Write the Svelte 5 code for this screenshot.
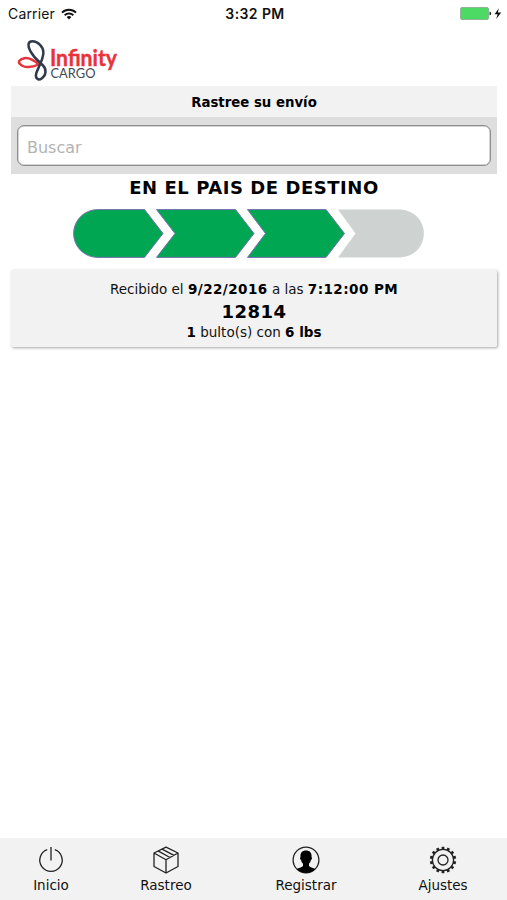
<script lang="ts">
  let query = $state('');

  const shipment = {
    status: 'EN EL PAIS DE DESTINO',
    date: '9/22/2016',
    time: '7:12:00 PM',
    code: '12814',
    packages: 1,
    weight: '6 lbs',
  };

  // How many of the four delivery stages have been reached
  const reached = 3;

  const stages = [
    'M24.5 .6H71.5L90 24.5L71.5 48.4H24.5A23.9 23.9 0 0 1 24.5 .6Z',
    'M83.5 .6H162.5L181 24.5L162.5 48.4H83.5L102 24.5Z',
    'M174.5 .6H253L271.5 24.5L253 48.4H174.5L192.5 24.5Z',
    'M265 .6H327A23.9 23.9 0 0 1 327 48.4H265L282.5 24.5Z',
  ];

  const tabs = ['Inicio', 'Rastreo', 'Registrar', 'Ajustes'];

  const teeth = Array.from({ length: 14 }, (_, i) => (i * 360) / 14);
</script>

<div class="screen">
  <div class="status-bar">
    <div class="carrier">
      <span>Carrier</span>
      <svg width="16" height="12" viewBox="0 0 16 12" fill="none" stroke="#111" stroke-width="2">
        <path d="M1 4.6a10 10 0 0 1 14 0" />
        <path d="M3.7 7.3a6.1 6.1 0 0 1 8.6 0" />
        <path d="M8 11.6 5.6 9.1a3.5 3.5 0 0 1 4.8 0Z" fill="#111" stroke="none" />
      </svg>
    </div>
    <span class="clock">3:32 PM</span>
    <svg class="battery" width="42" height="14" viewBox="0 0 42 14">
      <rect x=".5" y=".5" width="28" height="12" rx="1.5" fill="#4cd964" stroke="#8fb396" />
      <path d="M29.5 4.8h.7q.9 0 .9 1.7t-.9 1.7h-.7Z" fill="#222" />
      <path d="M38.8 1.2 34.6 7.2h3L36.2 12l5-6.5h-3.3Z" fill="#111" />
    </svg>
  </div>

  <header class="brand">
    <svg width="104" height="44" viewBox="0 0 104 44" role="img" aria-label="Infinity Cargo">
      <g fill="none" stroke-width="2.5" stroke-linejoin="round">
        <path stroke="#e5343b" d="M21.500 25.500C18 21.500 12 18.500 7.500 19.200C3 20 .5 22.500 3 25C6.500 29 15 28.800 21.500 25.500Z" />
        <path stroke="#2f3b4b" d="M15.500 2.300C10.500 2.300 10.500 7.300 13.500 12.300C17.500 19.500 22 22.500 26 26.500C30 30.500 29 36.500 24.700 39.500C21 42 18 39 19.200 34.500C20.500 29.500 26.400 21 26.400 13.500C26.400 7.500 20.500 2.300 15.500 2.300Z" />
      </g>
      <text class="brand-name" x="33" y="27" textLength="67" lengthAdjust="spacingAndGlyphs">Infinity</text>
      <text class="brand-sub" x="33.500" y="39.300" textLength="45" lengthAdjust="spacingAndGlyphs">CARGO</text>
    </svg>
  </header>

  <main>
    <h1>Rastree su envío</h1>
    <div class="search">
      <input type="text" placeholder="Buscar" bind:value={query} />
    </div>

    <h2>{shipment.status}</h2>
    <svg class="progress" width="351" height="49" viewBox="0 0 351 49">
      {#each stages as d, i}
        <path {d} class:done={i < reached} />
      {/each}
    </svg>

    <section class="card">
      <p class="received">Recibido el <b>{shipment.date}</b> a las <b>{shipment.time}</b></p>
      <p class="code">{shipment.code}</p>
      <p><b>{shipment.packages}</b> bulto(s) con <b>{shipment.weight}</b></p>
    </section>
  </main>

  <nav>
    {#each tabs as tab, i}
      <div class="tab">
        <svg width="28" height="28" viewBox="0 0 28 28" fill="none" stroke="#222" stroke-width="1.3">
          {#if i === 0}
            <path d="M10.200 3.700A11.200 11.200 0 1 0 17.800 3.700M14 1v13.500" />
          {:else if i === 1}
            <path stroke-linejoin="round" d="M14 1.200 26 7v13.500L14 27 2 20.500V7ZM2 7l12 6.800L26 7M14 13.800V27M6 4.900 18 11.500M10 3.100 22 9.300" />
          {:else if i === 2}
            <circle cx="14" cy="14" r="12.900" />
            <path fill="#000" stroke="none" d="M14 4.600c4 0 6 2.700 5.500 6.300.8.600.5 2.800-.6 3.200-.3 1.700-1 2.900-1.900 3.600v2.200c1.500 1.400 4.500 1.900 6.200 3.200a12.900 12.900 0 0 1-18.400 0c1.700-1.300 4.700-1.800 6.200-3.200v-2.200c-.9-.7-1.600-1.900-1.900-3.600-1.100-.4-1.400-2.600-.6-3.200-.5-3.600 1.500-6.300 5.500-6.300Z" />
          {:else}
            <circle cx="14" cy="14" r="10.600" />
            <circle cx="14" cy="14" r="5" />
            {#each teeth as angle}
              <path d="M12.600 2.200h2.800" stroke-width="2.800" transform="rotate({angle} 14 14)" />
            {/each}
          {/if}
        </svg>
        <span>{tab}</span>
      </div>
    {/each}
  </nav>
</div>

<style>
  :global(body) {
    margin: 0;
    background: #fff;
  }

  .screen {
    display: flex;
    flex-direction: column;
    width: 507px;
    height: 900px;
    overflow: hidden;
    font-family: Verdana, 'DejaVu Sans', sans-serif;
    font-size: 13.5px;
    color: #111;
  }

  .status-bar {
    display: grid;
    grid-template-columns: 1fr auto 1fr;
    align-items: center;
    height: 28px;
    padding: 0 5px 1px 8px;
    box-sizing: border-box;
    font-family: Inter, Roboto, sans-serif;
    font-size: 14px;
    line-height: 17px;
  }
  .carrier {
    display: flex;
    align-items: center;
    gap: 6px;
    letter-spacing: 0.15px;
  }
  .clock {
    font-weight: 600;
    letter-spacing: 0.4px;
  }
  .battery {
    justify-self: end;
  }

  .brand {
    height: 47px;
    padding: 11px 0 0 17px;
  }
  .brand svg {
    display: block;
    overflow: visible;
  }
  .brand-name {
    font: 700 23.5px Lato, sans-serif;
    fill: #e9323a;
    stroke: #e9323a;
    stroke-width: 0.4px;
  }
  .brand-sub {
    font: 400 14px Lato, sans-serif;
    fill: #46484f;
  }

  main {
    flex: 1;
    padding: 0 10px 0 11px;
  }
  h1 {
    margin: 0;
    height: 31px;
    line-height: 33px;
    background: #f2f2f2;
    text-align: center;
    font-size: 13.3px;
    color: #000;
  }
  .search {
    height: 57px;
    padding: 8px 6px;
    box-sizing: border-box;
    background: #dedede;
  }
  .search input {
    display: block;
    width: 100%;
    height: 41px;
    padding: 3px 8px 0 9px;
    box-sizing: border-box;
    border: 1px solid #8e8e8e;
    border-radius: 7px;
    background: #fff;
    box-shadow: inset 0 0 0 0.5px #aaa;
    font: 16px Verdana, 'DejaVu Sans', sans-serif;
    outline: none;
  }
  .search input::placeholder {
    color: #b3b3b3;
    opacity: 1;
  }

  h2 {
    margin: 0;
    height: 35px;
    line-height: 28px;
    text-align: center;
    font-size: 18px;
    letter-spacing: 0.55px;
    color: #000;
  }
  .progress {
    display: block;
    margin-left: 62px;
  }
  .progress path {
    fill: #ced3d1;
  }
  .progress path.done {
    fill: #00a651;
    stroke: #7770b0;
    stroke-width: 1;
  }

  .card {
    height: 77px;
    margin: 12px 0 0;
    padding-top: 9px;
    box-sizing: border-box;
    border-radius: 2px;
    background: #f2f2f2;
    box-shadow: 1px 1px 3px rgba(0, 0, 0, 0.35);
    text-align: center;
  }
  .card p {
    margin: 0;
    line-height: 21.5px;
  }
  .card b,
  .card .code {
    color: #000;
  }
  .received b {
    letter-spacing: 0.45px;
  }
  .card .code {
    font-size: 18px;
    font-weight: 700;
    letter-spacing: 0.5px;
  }

  nav {
    display: grid;
    grid-template-columns: 102px 128px 152px 122px;
    height: 62px;
    background: #f2f2f2;
  }
  .tab {
    display: flex;
    flex-direction: column;
    align-items: center;
    padding-top: 8px;
    line-height: 23px;
  }
</style>
